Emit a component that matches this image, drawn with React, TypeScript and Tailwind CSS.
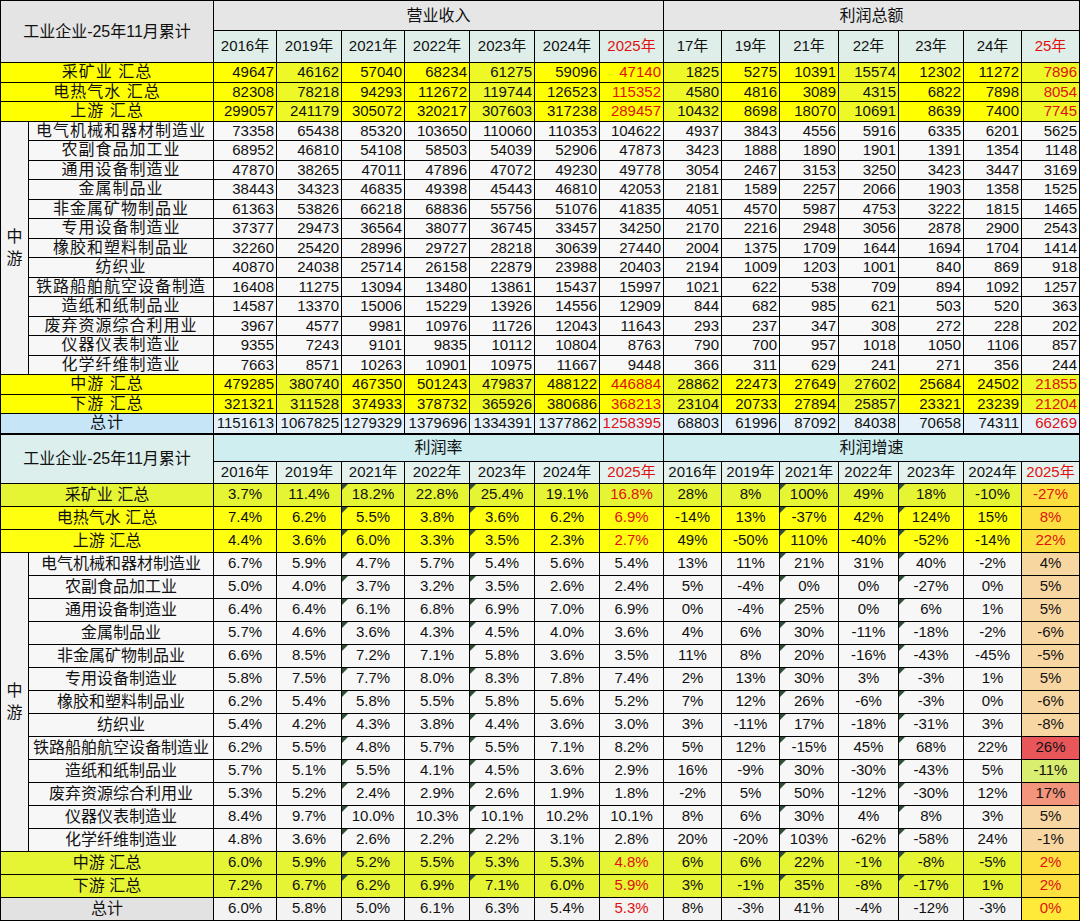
type Kind = "up" | "mid" | "sum" | "total";
type Row = { label: string; kind: Kind; v: string[] };

const topRows: Row[] = [
  { label: "采矿业 汇总", kind: "up", v: ["49647", "46162", "57040", "68234", "61275", "59096", "47140", "1825", "5275", "10391", "15574", "12302", "11272", "7896"] },
  { label: "电热气水 汇总", kind: "up", v: ["82308", "78218", "94293", "112672", "119744", "126523", "115352", "4580", "4816", "3089", "4315", "6822", "7898", "8054"] },
  { label: "上游 汇总", kind: "up", v: ["299057", "241179", "305072", "320217", "307603", "317238", "289457", "10432", "8698", "18070", "10691", "8639", "7400", "7745"] },
  { label: "电气机械和器材制造业", kind: "mid", v: ["73358", "65438", "85320", "103650", "110060", "110353", "104622", "4937", "3843", "4556", "5916", "6335", "6201", "5625"] },
  { label: "农副食品加工业", kind: "mid", v: ["68952", "46810", "54108", "58503", "54039", "52906", "47873", "3423", "1888", "1890", "1901", "1391", "1354", "1148"] },
  { label: "通用设备制造业", kind: "mid", v: ["47870", "38265", "47011", "47896", "47072", "49230", "49778", "3054", "2467", "3153", "3250", "3423", "3447", "3169"] },
  { label: "金属制品业", kind: "mid", v: ["38443", "34323", "46835", "49398", "45443", "46810", "42053", "2181", "1589", "2257", "2066", "1903", "1358", "1525"] },
  { label: "非金属矿物制品业", kind: "mid", v: ["61363", "53826", "66218", "68836", "55756", "51076", "41835", "4051", "4570", "5987", "4753", "3222", "1815", "1465"] },
  { label: "专用设备制造业", kind: "mid", v: ["37377", "29473", "36564", "38077", "36745", "33457", "34250", "2170", "2216", "2948", "3056", "2878", "2900", "2543"] },
  { label: "橡胶和塑料制品业", kind: "mid", v: ["32260", "25420", "28996", "29727", "28218", "30639", "27440", "2004", "1375", "1709", "1644", "1694", "1704", "1414"] },
  { label: "纺织业", kind: "mid", v: ["40870", "24038", "25714", "26158", "22879", "23988", "20403", "2194", "1009", "1203", "1001", "840", "869", "918"] },
  { label: "铁路船舶航空设备制造", kind: "mid", v: ["16408", "11275", "13094", "13480", "13861", "15437", "15997", "1021", "622", "538", "709", "894", "1092", "1257"] },
  { label: "造纸和纸制品业", kind: "mid", v: ["14587", "13370", "15006", "15229", "13926", "14556", "12909", "844", "682", "985", "621", "503", "520", "363"] },
  { label: "废弃资源综合利用业", kind: "mid", v: ["3967", "4577", "9981", "10976", "11726", "12043", "11643", "293", "237", "347", "308", "272", "228", "202"] },
  { label: "仪器仪表制造业", kind: "mid", v: ["9355", "7243", "9101", "9835", "10112", "10804", "8763", "790", "700", "957", "1018", "1050", "1106", "857"] },
  { label: "化学纤维制造业", kind: "mid", v: ["7663", "8571", "10263", "10901", "10975", "11667", "9448", "366", "311", "629", "241", "271", "356", "244"] },
  { label: "中游 汇总", kind: "sum", v: ["479285", "380740", "467350", "501243", "479837", "488122", "446884", "28862", "22473", "27649", "27602", "25684", "24502", "21855"] },
  { label: "下游 汇总", kind: "sum", v: ["321321", "311528", "374933", "378732", "365926", "380686", "368213", "23104", "20733", "27894", "25857", "23321", "23239", "21204"] },
  { label: "总计", kind: "total", v: ["1151613", "1067825", "1279329", "1379696", "1334391", "1377862", "1258395", "68803", "61996", "87092", "84038", "70658", "74311", "66269"] },
];

const bottomRows: Row[] = [
  { label: "采矿业 汇总", kind: "up", v: ["3.7%", "11.4%", "18.2%", "22.8%", "25.4%", "19.1%", "16.8%", "28%", "8%", "100%", "49%", "18%", "-10%", "-27%"] },
  { label: "电热气水 汇总", kind: "up", v: ["7.4%", "6.2%", "5.5%", "3.8%", "3.6%", "6.2%", "6.9%", "-14%", "13%", "-37%", "42%", "124%", "15%", "8%"] },
  { label: "上游 汇总", kind: "up", v: ["4.4%", "3.6%", "6.0%", "3.3%", "3.5%", "2.3%", "2.7%", "49%", "-50%", "110%", "-40%", "-52%", "-14%", "22%"] },
  { label: "电气机械和器材制造业", kind: "mid", v: ["6.7%", "5.9%", "4.7%", "5.7%", "5.4%", "5.6%", "5.4%", "13%", "11%", "21%", "31%", "40%", "-2%", "4%"] },
  { label: "农副食品加工业", kind: "mid", v: ["5.0%", "4.0%", "3.7%", "3.2%", "3.5%", "2.6%", "2.4%", "5%", "-4%", "0%", "0%", "-27%", "0%", "5%"] },
  { label: "通用设备制造业", kind: "mid", v: ["6.4%", "6.4%", "6.1%", "6.8%", "6.9%", "7.0%", "6.9%", "0%", "-4%", "25%", "0%", "6%", "1%", "5%"] },
  { label: "金属制品业", kind: "mid", v: ["5.7%", "4.6%", "3.6%", "4.3%", "4.5%", "4.0%", "3.6%", "4%", "6%", "30%", "-11%", "-18%", "-2%", "-6%"] },
  { label: "非金属矿物制品业", kind: "mid", v: ["6.6%", "8.5%", "7.2%", "7.1%", "5.8%", "3.6%", "3.5%", "11%", "8%", "20%", "-16%", "-43%", "-45%", "-5%"] },
  { label: "专用设备制造业", kind: "mid", v: ["5.8%", "7.5%", "7.7%", "8.0%", "8.3%", "7.8%", "7.4%", "2%", "13%", "30%", "3%", "-3%", "1%", "5%"] },
  { label: "橡胶和塑料制品业", kind: "mid", v: ["6.2%", "5.4%", "5.8%", "5.5%", "5.8%", "5.6%", "5.2%", "7%", "12%", "26%", "-6%", "-3%", "0%", "-6%"] },
  { label: "纺织业", kind: "mid", v: ["5.4%", "4.2%", "4.3%", "3.8%", "4.4%", "3.6%", "3.0%", "3%", "-11%", "17%", "-18%", "-31%", "3%", "-8%"] },
  { label: "铁路船舶航空设备制造业", kind: "mid", v: ["6.2%", "5.5%", "4.8%", "5.7%", "5.5%", "7.1%", "8.2%", "5%", "12%", "-15%", "45%", "68%", "22%", "26%"] },
  { label: "造纸和纸制品业", kind: "mid", v: ["5.7%", "5.1%", "5.5%", "4.1%", "4.5%", "3.6%", "2.9%", "16%", "-9%", "30%", "-30%", "-43%", "5%", "-11%"] },
  { label: "废弃资源综合利用业", kind: "mid", v: ["5.3%", "5.2%", "2.4%", "2.9%", "2.6%", "1.9%", "1.8%", "-2%", "5%", "50%", "-12%", "-30%", "12%", "17%"] },
  { label: "仪器仪表制造业", kind: "mid", v: ["8.4%", "9.7%", "10.0%", "10.3%", "10.1%", "10.2%", "10.1%", "8%", "6%", "30%", "4%", "8%", "3%", "5%"] },
  { label: "化学纤维制造业", kind: "mid", v: ["4.8%", "3.6%", "2.6%", "2.2%", "2.2%", "3.1%", "2.8%", "20%", "-20%", "103%", "-62%", "-58%", "24%", "-1%"] },
  { label: "中游 汇总", kind: "sum", v: ["6.0%", "5.9%", "5.2%", "5.5%", "5.3%", "5.3%", "4.8%", "6%", "6%", "22%", "-1%", "-8%", "-5%", "2%"] },
  { label: "下游 汇总", kind: "sum", v: ["7.2%", "6.7%", "6.2%", "6.9%", "7.1%", "6.0%", "5.9%", "3%", "-1%", "35%", "-8%", "-17%", "1%", "2%"] },
  { label: "总计", kind: "total", v: ["6.0%", "5.8%", "5.0%", "6.1%", "6.3%", "5.4%", "5.3%", "8%", "-3%", "41%", "-4%", "-12%", "-3%", "0%"] },
];

const topYears = ["2016年", "2019年", "2021年", "2022年", "2023年", "2024年", "2025年", "17年", "19年", "21年", "22年", "23年", "24年", "25年"];
const bottomYears = ["2016年", "2019年", "2021年", "2022年", "2023年", "2024年", "2025年", "2016年", "2019年", "2021年", "2022年", "2023年", "2024年", "2025年"];

const gridCols =
  "grid grid-cols-[27px_184px_62px_64px_62px_64px_64px_64px_63px_57px_57px_58px_59px_64px_57px_57px] gap-px bg-black border border-black";

// last-column fill for the bottom growth table, per row
const growthFill: Record<string, string> = {
  "铁路船舶航空设备制造业": "bg-[#e9565a]",
  "造纸和纸制品业": "bg-[#d9ee70]",
  "废弃资源综合利用业": "bg-[#f3957c]",
};

function Tri() {
  return <span className="absolute left-0 top-0 h-0 w-0 border-t-[6px] border-r-[6px] border-t-[#2f4f38] border-r-transparent" />;
}

function TopTable() {
  return (
    <div className={`${gridCols} grid-rows-[29px_31px_repeat(19,18.5px)]`}>
      <div className="col-span-2 row-span-2 flex items-center justify-center bg-[#e4e4e4] text-[16px]">工业企业-25年11月累计</div>
      <div className="col-span-7 flex items-center justify-center bg-[#e6e6e6] text-[16px]">营业收入</div>
      <div className="col-span-7 flex items-center justify-center bg-[#e6e6e6] text-[16px]">利润总额</div>
      {topYears.map((y, i) => (
        <div
          key={i}
          className={`flex items-center justify-center bg-[#dfeee9] text-[15px] ${i === 6 || i === 13 ? "text-[#e01010]" : "text-[#111]"}`}
        >
          {y}
        </div>
      ))}
      {topRows.map((r, ri) => {
        const yellow = r.kind === "up" || r.kind === "sum";
        const total = r.kind === "total";
        return [
          ri === 3 ? (
            <div key={`g${ri}`} className="row-span-13 flex flex-col items-center justify-center bg-[#f3f3f3] text-[16px] leading-[22px]">
              <span>中</span>
              <span>游</span>
            </div>
          ) : null,
          <div
            key={`l${ri}`}
            className={`flex items-center justify-center overflow-hidden whitespace-nowrap text-[16px] tracking-[1px] ${r.kind === "mid" ? "" : "col-span-2"} ${
              yellow ? "bg-[#ffff00]" : total ? "bg-[#c6e5f6]" : "bg-[#f7f7f7]"
            }`}
          >
            {r.label}
          </div>,
          ...r.v.map((v, ci) => {
            const hot = ci === 6 || ci === 13;
            return (
              <div
                key={`${ri}-${ci}`}
                className={`flex items-center justify-end overflow-hidden pr-0.5 text-[15px] ${
                  yellow ? (ci % 3 === 1 ? "bg-[#eef826]" : "bg-[#ffff00]") : total ? "bg-[#e4f1fa]" : "bg-[#f8f8f8]"
                } ${hot && (yellow || total) ? "text-[#e01010]" : "text-[#111]"}`}
              >
                {v}
              </div>
            );
          }),
        ];
      })}
    </div>
  );
}

function BottomTable() {
  return (
    <div className={`${gridCols} grid-rows-[26px_21px_repeat(19,22px)]`}>
      <div className="col-span-2 row-span-2 flex items-center justify-center bg-[#dcefec] text-[16px]">工业企业-25年11月累计</div>
      <div className="col-span-7 flex items-center justify-center bg-[#cfeef0] text-[16px]">利润率</div>
      <div className="col-span-7 flex items-center justify-center bg-[#cfeef0] text-[16px]">利润增速</div>
      {bottomYears.map((y, i) => (
        <div
          key={i}
          className={`flex items-center justify-center bg-[#e3f2ef] text-[15px] ${i === 6 || i === 13 ? "text-[#e01010]" : "text-[#111]"}`}
        >
          {y}
        </div>
      ))}
      {bottomRows.map((r, ri) => {
        const yellow = r.kind === "up" || r.kind === "sum";
        const total = r.kind === "total";
        const lime = ri === 0 || ri === 16 || ri === 17;
        return [
          ri === 3 ? (
            <div key={`g${ri}`} className="row-span-13 flex flex-col items-center justify-center bg-[#f3f3f3] text-[16px] leading-[22px]">
              <span>中</span>
              <span>游</span>
            </div>
          ) : null,
          <div
            key={`l${ri}`}
            className={`flex items-center justify-center overflow-hidden whitespace-nowrap text-[16px] ${r.kind === "mid" ? "" : "col-span-2"} ${
              yellow ? (lime ? "bg-[#e6f533]" : "bg-[#ffff10]") : total ? "bg-[#e2e2e2]" : "bg-[#f7f7f7]"
            }`}
          >
            {r.label}
          </div>,
          ...r.v.map((v, ci) => {
            const hot = ci === 6 || ci === 13;
            let bg = yellow ? (lime ? "bg-[#e6f533]" : "bg-[#ffff10]") : total ? "bg-[#f3f3f3]" : "bg-[#f7f7f7]";
            if (ci === 13) {
              bg = yellow ? "bg-[#fbe040]" : total ? "bg-[#ffea3a]" : growthFill[r.label] ?? "bg-[#f8d6a2]";
            }
            const tri = (ci === 2 || ci === 4 || ci === 9 || ci === 11) && ri < 18;
            return (
              <div
                key={`${ri}-${ci}`}
                className={`relative flex items-center justify-center overflow-hidden text-[15px] ${bg} ${
                  hot && (yellow || total) ? "text-[#e01010]" : "text-[#111]"
                }`}
              >
                {tri ? <Tri /> : null}
                {v}
              </div>
            );
          }),
        ];
      })}
    </div>
  );
}

export default function App() {
  return (
    <div className="h-[921px] w-[1080px] overflow-hidden bg-white text-[#111] [font-family:'Liberation_Sans','Noto_Sans_CJK_SC',sans-serif]">
      <TopTable />
      <BottomTable />
    </div>
  );
}
